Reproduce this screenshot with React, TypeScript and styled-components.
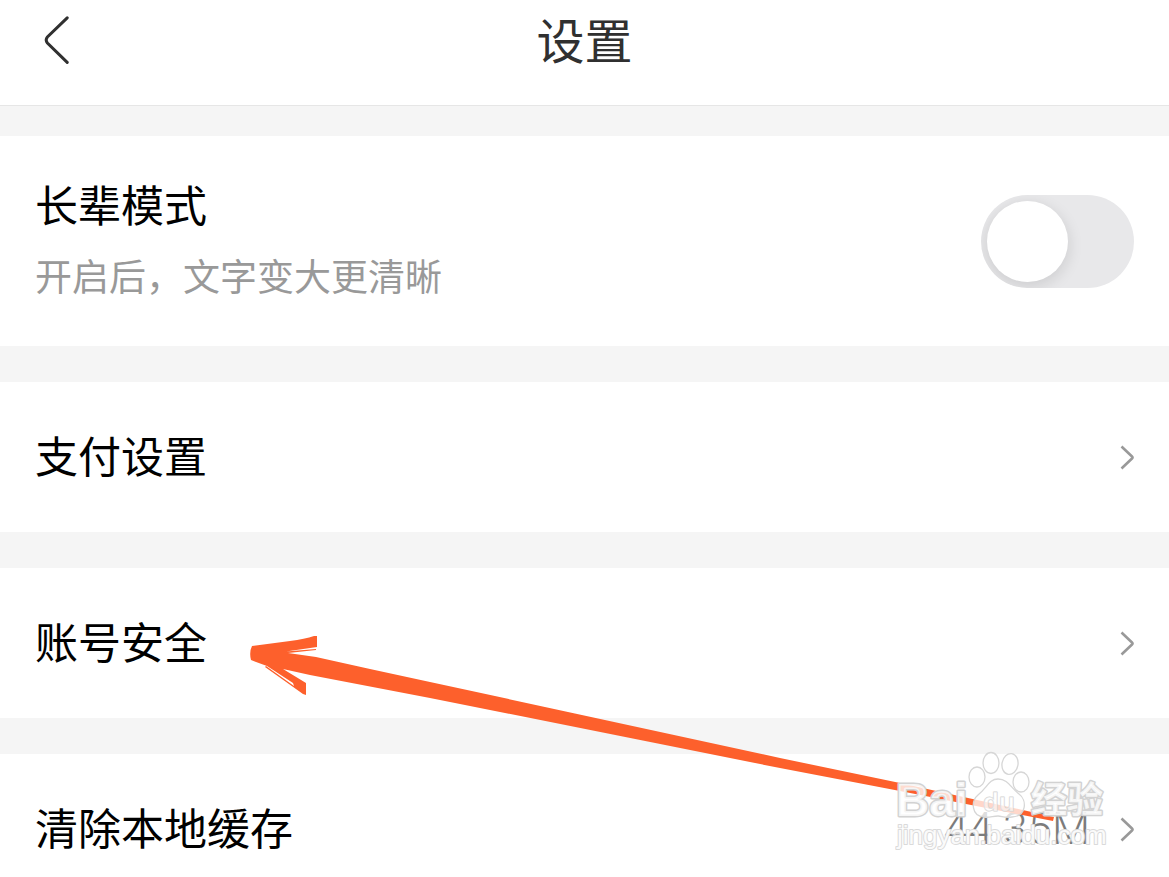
import React from 'react';
import styled, { createGlobalStyle } from 'styled-components';

const GlobalStyle = createGlobalStyle`
  *, *::before, *::after { box-sizing: border-box; }
  body {
    margin: 0;
    background: #f5f5f5;
    font-family: "Noto Sans CJK SC", sans-serif;
    color: #000;
  }
`;

const Page = styled.div`
  position: relative;
  height: 100vh;
  overflow: hidden;
`;

const Header = styled.header`
  display: grid;
  grid-template-columns: 1fr auto 1fr;
  align-items: center;
  height: 106px;
  padding: 0 36px 24px;
  background: #fff;
  border-bottom: 1px solid #e6e6e6;
`;

const BackButton = styled.button`
  display: flex;
  width: 40px;
  padding: 0 0 0 8px;
  border: 0;
  background: none;
  cursor: pointer;
`;

const Title = styled.h1`
  margin: 0;
  padding-bottom: 6px;
  font-size: 48px;
  font-weight: 400;
  line-height: 64px;
  color: #303030;
`;

const Main = styled.main`
  display: flex;
  flex-direction: column;
  gap: 36px;
  padding-top: 30px;
`;

const ModeSection = styled.section`
  display: flex;
  align-items: center;
  justify-content: space-between;
  height: 210px;
  padding: 0 35px;
  background: #fff;
`;

const ModeText = styled.div`
  display: flex;
  flex-direction: column;
  gap: 14px;
  padding-bottom: 6px;
`;

const Label = styled.label`
  font-size: 43px;
  line-height: 60px;
`;

const Hint = styled.p`
  margin: 0;
  font-size: 37px;
  line-height: 56px;
  color: #999;
`;

const Toggle = styled.input`
  appearance: none;
  flex: none;
  width: 153px;
  height: 93px;
  margin: 0;
  padding: 6px;
  border-radius: 47px;
  background: #e8e8ea;
  overflow: hidden;
  cursor: pointer;

  &::before {
    content: "";
    display: block;
    width: 81px;
    height: 81px;
    border-radius: 50%;
    background: #fff;
    box-shadow: 0 4px 14px 2px rgba(0, 0, 0, 0.1);
  }
  &:checked { background: #ff6a2c; }
  &:checked::before { margin-left: 60px; }
`;

const Row = styled.a`
  display: flex;
  align-items: center;
  height: 150px;
  padding: 0 35px;
  background: #fff;
  color: #000;
  font-size: 43px;
  line-height: 60px;
  text-decoration: none;
`;

const RowLabel = styled.span`
  flex: 1;
  padding-bottom: 6px;
`;

const RowValue = styled.span`
  margin-right: 30px;
  font-family: Roboto, sans-serif;
  font-size: 44px;
  font-weight: 300;
  color: #7c7c7c;
`;

const Arrow = styled.svg`
  position: absolute;
  top: 630px;
  left: 245px;
  pointer-events: none;
`;

const Watermark = styled.svg`
  position: absolute;
  top: 745px;
  right: 59px;
  pointer-events: none;
  font-family: "Liberation Sans", "Noto Sans CJK SC", sans-serif;
`;

const Chevron = () => (
  <svg width="14" height="26" viewBox="0 0 14 26" fill="none" aria-hidden="true">
    <path d="M1.5 2.5 L12 12.5 Q13 13.5 12 14.5 L1.5 24.5" stroke="#999" strokeWidth="2.6" />
  </svg>
);

const rows = [
  { label: '支付设置' },
  { label: '账号安全' },
  { label: '清除本地缓存', value: '44.35M' },
];

export default function App() {
  return (
    <Page>
      <GlobalStyle />
      <Header>
        <BackButton aria-label="返回">
          <svg width="26" height="50" viewBox="0 0 26 50" fill="none">
            <path
              d="M23.2 1.8 L3.4 21 Q1 24 3.4 27 L23.2 46.4"
              stroke="#303030"
              strokeWidth="3"
              strokeLinecap="round"
            />
          </svg>
        </BackButton>
        <Title>设置</Title>
      </Header>
      <Main>
        <ModeSection>
          <ModeText>
            <Label htmlFor="elder-mode">长辈模式</Label>
            <Hint id="elder-hint">开启后，文字变大更清晰</Hint>
          </ModeText>
          <Toggle id="elder-mode" type="checkbox" role="switch" aria-describedby="elder-hint" />
        </ModeSection>
        {rows.map((row) => (
          <Row key={row.label} href="#">
            <RowLabel>{row.label}</RowLabel>
            {row.value && <RowValue>{row.value}</RowValue>}
            <Chevron />
          </Row>
        ))}
      </Main>

      <Arrow width="812" height="195" viewBox="245 630 812 195" aria-hidden="true">
        <path
          fill="#fd602c"
          d="M252 646 L290 641 Q305 639 314 636 L317 636 L317 647 L286 651.5 L316 649 L316 650 L288 653
             L316 657 L370 669 L430 682 L780 758 L900 783 L1054 817 L1053 821 L900 791 L780 768
             L430 698 L310 675 L283 669 L306 683 L306 695 L303 694 L265 667 L266 666 L294 686
             L293 683 L267 666 L251 660 Q249 652 252 646 Z"
        />
      </Arrow>

      <Watermark width="215" height="110" viewBox="895 745 215 110" aria-hidden="true">
        <g fill="#fff" fillOpacity="0.75" stroke="#d6d6d6" strokeWidth="1.3">
          <ellipse cx="977" cy="777" rx="8" ry="10" />
          <ellipse cx="991" cy="763" rx="8" ry="10.5" />
          <ellipse cx="1010" cy="764" rx="8" ry="10.5" transform="rotate(10 1010 764)" />
          <ellipse cx="1021" cy="782" rx="8" ry="10" />
          <path d="M998 779 C1008 779 1011 788 1019 794 C1027 800 1027 816 1012 817 C1004 818 1002 816 998 816 C993 816 989 818 984 817 C971 816 971 801 978 795 C987 788 989 779 998 779 Z" />
        </g>
        <g fill="#fff" fillOpacity="0.8" stroke="#d2d2d2" strokeWidth="3" strokeLinejoin="round" paintOrder="stroke">
          <text x="896" y="816" fontSize="46" fontWeight="700">Bai</text>
          <text x="983" y="811" fontSize="26" fontWeight="700" fillOpacity="0.5" strokeWidth="1">du</text>
          <text x="1031" y="813" fontSize="36" fontWeight="700">经验</text>
          <text x="897" y="844" fontSize="26" strokeWidth="2" stroke="#dadada" fillOpacity="0.9">jingyan.baidu.com</text>
        </g>
      </Watermark>
    </Page>
  );
}
